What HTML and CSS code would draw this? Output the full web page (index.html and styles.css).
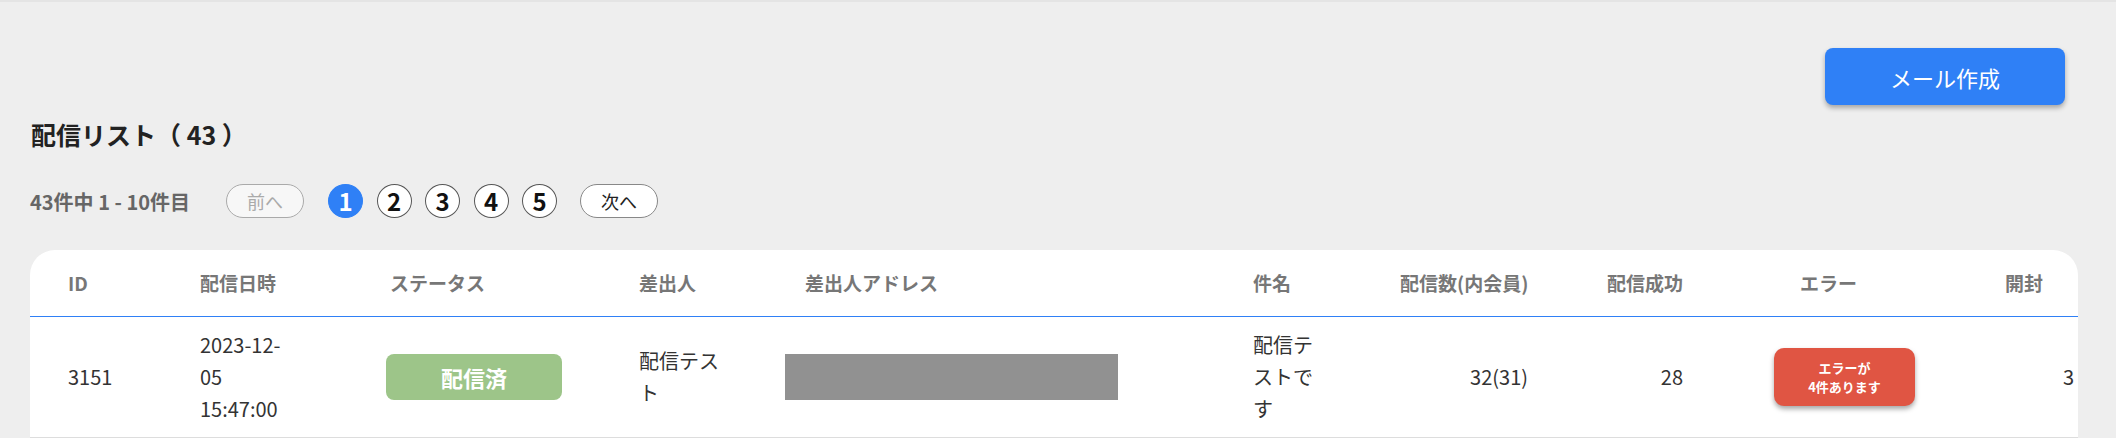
FILE: index.html
```html
<!DOCTYPE html>
<html>
<head>
    <meta charset="utf-8">
    <title>配信リスト</title>
    <link rel="stylesheet" href="styles.css">
</head>
<body>
    <div class="page">
        <div class="toolbar">
            <button class="create-btn">メール作成</button>
        </div>

        <h2 class="title">配信リスト（ 43 ）</h2>

        <div class="pager">
            <span class="count">43件中 1 - 10件目</span>
            <button class="pager-btn" disabled>前へ</button>
            <div class="pages">
                <span class="page-num active">1</span>
                <span class="page-num">2</span>
                <span class="page-num">3</span>
                <span class="page-num">4</span>
                <span class="page-num">5</span>
            </div>
            <button class="pager-btn">次へ</button>
        </div>

        <div class="card">
            <table class="list">
                <thead>
                    <tr>
                        <th class="c-id">ID</th>
                        <th class="c-date">配信日時</th>
                        <th class="c-status">ステータス</th>
                        <th class="c-from">差出人</th>
                        <th class="c-addr">差出人アドレス</th>
                        <th class="c-subject">件名</th>
                        <th class="c-num">配信数(内会員)</th>
                        <th class="c-ok">配信成功</th>
                        <th class="c-err">エラー</th>
                        <th class="c-open">開封</th>
                    </tr>
                </thead>
                <tbody>
                    <tr>
                        <td class="c-id">3151</td>
                        <td class="c-date">2023-12-05 15:47:00</td>
                        <td class="c-status"><span class="badge-done">配信済</span></td>
                        <td class="c-from">配信テスト</td>
                        <td class="c-addr"><span class="masked"></span></td>
                        <td class="c-subject">配信テストです</td>
                        <td class="c-num">32(31)</td>
                        <td class="c-ok">28</td>
                        <td class="c-err"><button class="err-btn">エラーが<br>4件あります</button></td>
                        <td class="c-open">3</td>
                    </tr>
                </tbody>
            </table>
        </div>
    </div>
</body>
</html>
```

FILE: styles.css
```css
body {
    margin: 0;
    padding: 0;
    background-color: #eeeeee;
    border-top: 2px solid #e4e4e4;
    font-family: "Noto Sans CJK JP", "Noto Sans", sans-serif;
    color: #333;
}

.page {
    padding: 46px 38px 0 30px;
}

.toolbar {
    display: flex;
    justify-content: flex-end;
    padding-right: 13px;
}

.create-btn {
    width: 240px;
    height: 57px;
    border: none;
    border-radius: 8px;
    background-color: #2f80f6;
    color: #fff;
    font-family: inherit;
    font-size: 22px;
    box-shadow: 0 3px 5px rgba(0, 0, 0, 0.3);
    cursor: pointer;
}

.title {
    margin: 12px 0 0 1px;
    font-size: 25px;
    line-height: 35px;
    font-weight: bold;
    color: #222;
}

.pager {
    display: flex;
    align-items: center;
    height: 34px;
    margin-top: 32px;
}

.count {
    width: 196px;
    font-size: 20px;
    font-weight: bold;
    color: #666;
}

.pager-btn {
    width: 78px;
    height: 34px;
    border: 1px solid #888;
    border-radius: 17px;
    background-color: #fff;
    color: #222;
    font-family: inherit;
    font-size: 18px;
    padding: 0;
    cursor: pointer;
}

.pager-btn:disabled {
    border-color: #aaa;
    background-color: #f7f7f7;
    color: #aaa;
    cursor: default;
}

.pages {
    display: flex;
    gap: 13.5px;
    margin: 0 23px 0 24px;
}

.page-num {
    display: flex;
    align-items: center;
    justify-content: center;
    box-sizing: border-box;
    width: 35px;
    height: 34px;
    border: 1px solid #555;
    border-radius: 50%;
    background-color: #fff;
    color: #111;
    font-size: 24px;
    font-weight: bold;
    line-height: 1;
    cursor: pointer;
}

.page-num.active {
    background-color: #2f80f6;
    border-color: #2f80f6;
    color: #fff;
}

.card {
    margin-top: 32px;
    background-color: #fff;
    border-radius: 25px 25px 0 0;
    overflow: hidden;
}

.list {
    width: 2165px;
    table-layout: fixed;
    border-collapse: separate;
    border-spacing: 0;
}

.list th,
.list td {
    box-sizing: border-box;
    padding: 12px 10px;
    text-align: left;
    vertical-align: middle;
}

.list th {
    padding-top: 21px;
    padding-bottom: 21px;
    line-height: 24px;
    font-size: 19px;
    font-weight: bold;
    color: #777;
    border-bottom: 1px solid #2f80f6;
    white-space: nowrap;
}

.list td {
    font-size: 20px;
    line-height: 32px;
    color: #333;
    border-bottom: 1px solid #ddd;
    height: 121px;
}

.c-id { width: 160px; padding-left: 38px !important; }
.c-date { width: 190px; padding-right: 80px !important; }
.c-status { width: 249px; }
td.c-status { padding-left: 6px; }
.c-from { width: 156px; padding-right: 56px !important; }
.c-addr { width: 458px; }
th.c-addr { padding-left: 20px; }
td.c-addr { padding-left: 0; }
.c-subject { width: 147px; padding-right: 67px !important; }
.list .c-num { width: 148px; text-align: right; }
.list .c-ok { width: 155px; text-align: right; }
.c-err { width: 302px; }
th.c-err { padding-left: 107px; }
td.c-err { padding-left: 81px; }
.c-open { width: 200px; }
td.c-open { padding-left: 68px; }

.badge-done {
    display: flex;
    align-items: center;
    justify-content: center;
    width: 176px;
    height: 46px;
    border-radius: 8px;
    background-color: #9dc589;
    color: #fff;
    font-size: 22px;
    font-weight: bold;
}

.masked {
    display: block;
    width: 333px;
    height: 46px;
    background-color: #919191;
}

.err-btn {
    display: block;
    width: 141px;
    height: 58px;
    border: none;
    border-radius: 10px;
    background-color: #e05543;
    color: #fff;
    font-family: inherit;
    font-size: 13px;
    font-weight: bold;
    line-height: 19px;
    box-shadow: 0 3px 5px rgba(0, 0, 0, 0.35);
    cursor: pointer;
}
```
